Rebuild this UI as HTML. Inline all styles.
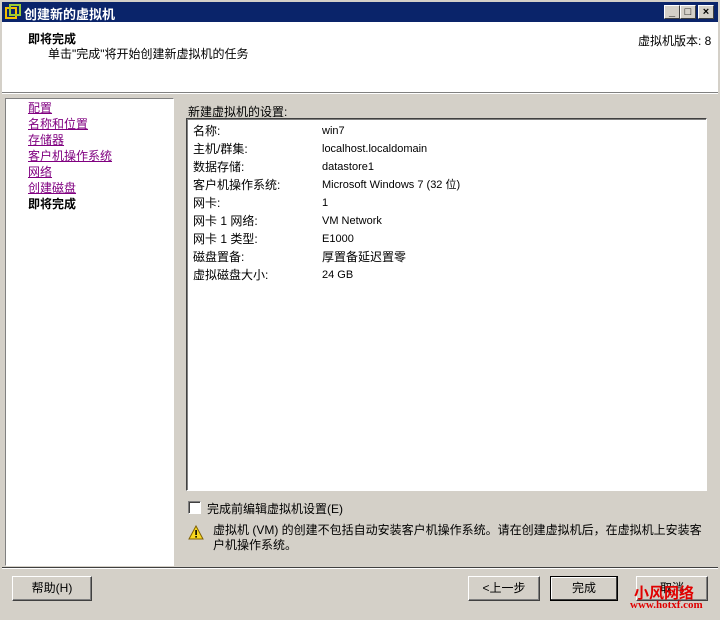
<!DOCTYPE html>
<html><head><meta charset="utf-8"><style>
*{margin:0;padding:0;box-sizing:border-box}
body{width:720px;height:620px;background:#d4d0c8;position:relative;overflow:hidden;font-family:"Liberation Sans","Noto Sans CJK SC","WenQuanYi Zen Hei",sans-serif;font-size:12px;color:#000}
.a{position:absolute;white-space:nowrap}
.title{left:0;top:0;width:720px;height:22px;background:#0a246a;border:2px solid #d4d0c8;border-bottom:0}
.title span{position:absolute;left:22px;top:2px;color:#fff;font-weight:bold;font-size:13px}
.tb{position:absolute;top:3px;width:16px;height:14px;background:#d4d0c8;border:1px solid;border-color:#fff #404040 #404040 #fff;font-size:11px;font-weight:bold;text-align:center;line-height:12px}
.header{left:2px;top:22px;width:716px;height:70px;background:#fff}
.sep{height:2px;border-top:1px solid #808080;border-bottom:1px solid #fff}
.left{left:5px;top:98px;width:169px;height:468px;background:#fff;border:1px solid;border-color:#808080 #fff #fff #808080}
.left a{display:block;color:#800080;text-decoration:underline;font-size:12px;height:16px;line-height:16px;margin-left:22px}
.box{left:186px;top:118px;width:521px;height:373px;background:#fff;border:1px solid;border-color:#404040 #fff #fff #404040;box-shadow:inset 1px 1px 0 #808080}
.row{position:absolute;left:6px;height:18px;line-height:18px}
.v{position:absolute;left:129px;font-size:11px}
.btn{position:absolute;top:576px;height:25px;background:#d4d0c8;border:1px solid;border-color:#fff #404040 #404040 #fff;box-shadow:inset -1px -1px 0 #808080;text-align:center;line-height:22px;font-size:12px}
</style></head><body>
<div class="a title">
<svg style="position:absolute;left:3px;top:2px" width="16" height="16"><rect x="1" y="4" width="10" height="10" fill="none" stroke="#f4c000" stroke-width="2"/><rect x="5" y="1" width="10" height="10" fill="none" stroke="#9acd32" stroke-width="2"/></svg>
<span>创建新的虚拟机</span>
<div class="tb" style="left:662px">_</div><div class="tb" style="left:678px">□</div><div class="tb" style="left:696px">×</div>
</div>
<div class="a header">
<div class="a" style="left:26px;top:8px;font-weight:bold">即将完成</div>
<div class="a" style="left:46px;top:23px">单击"完成"将开始创建新虚拟机的任务</div>
<div class="a" style="left:636px;top:10px">虚拟机版本: 8</div>
</div>
<div class="a sep" style="left:2px;top:92px;width:716px"></div>
<div class="a left" style="padding-top:1px">
<a>配置</a><a>名称和位置</a><a>存储器</a><a>客户机操作系统</a><a>网络</a><a>创建磁盘</a>
<div style="margin-left:22px;font-weight:bold;height:16px;line-height:16px">即将完成</div>
</div>
<div class="a" style="left:188px;top:103px">新建虚拟机的设置:</div>
<div class="a box">
<div class="row" style="top:3px">名称:<span class="v">win7</span></div>
<div class="row" style="top:21px">主机/群集:<span class="v">localhost.localdomain</span></div>
<div class="row" style="top:39px">数据存储:<span class="v">datastore1</span></div>
<div class="row" style="top:57px">客户机操作系统:<span class="v">Microsoft Windows 7 (32 位)</span></div>
<div class="row" style="top:75px">网卡:<span class="v">1</span></div>
<div class="row" style="top:93px">网卡 1 网络:<span class="v">VM Network</span></div>
<div class="row" style="top:111px">网卡 1 类型:<span class="v">E1000</span></div>
<div class="row" style="top:129px">磁盘置备:<span class="v" style="font-size:12px">厚置备延迟置零</span></div>
<div class="row" style="top:147px">虚拟磁盘大小:<span class="v">24 GB</span></div>
</div>
<div class="a" style="left:188px;top:501px;width:13px;height:13px;background:#fff;border:1px solid;border-color:#808080 #fff #fff #808080;box-shadow:inset 1px 1px 0 #404040"></div>
<div class="a" style="left:207px;top:500px">完成前编辑虚拟机设置(E)</div>
<svg class="a" style="left:188px;top:525px" width="16" height="15"><polygon points="8,1 15,14 1,14" fill="#f8d820" stroke="#806000"/><rect x="7.3" y="5" width="1.6" height="5" fill="#000"/><rect x="7.3" y="11" width="1.6" height="1.6" fill="#000"/></svg>
<div class="a" style="left:213px;top:523px;line-height:15px">虚拟机 (VM) 的创建不包括自动安装客户机操作系统。请在创建虚拟机后，在虚拟机上安装客<br>户机操作系统。</div>
<div class="a sep" style="left:2px;top:567px;width:716px;border-top-color:#404040"></div>
<div class="btn" style="left:12px;width:80px">帮助(H)</div>
<div class="btn" style="left:468px;width:72px">&lt;上一步</div>
<div class="btn" style="left:550px;width:68px;border:1px solid #000;box-shadow:inset -1px -1px 0 #404040,inset 1px 1px 0 #fff">完成</div>
<div class="btn" style="left:636px;width:72px">取消</div>
<div class="a" style="left:634px;top:582px;color:#e00000;font-weight:bold;font-size:15px">小风网络</div>
<div class="a" style="left:630px;top:599px;color:#e00000;font-weight:bold;font-size:11px;font-family:'Liberation Serif',serif">www.hotxf.com</div>
</body></html>
